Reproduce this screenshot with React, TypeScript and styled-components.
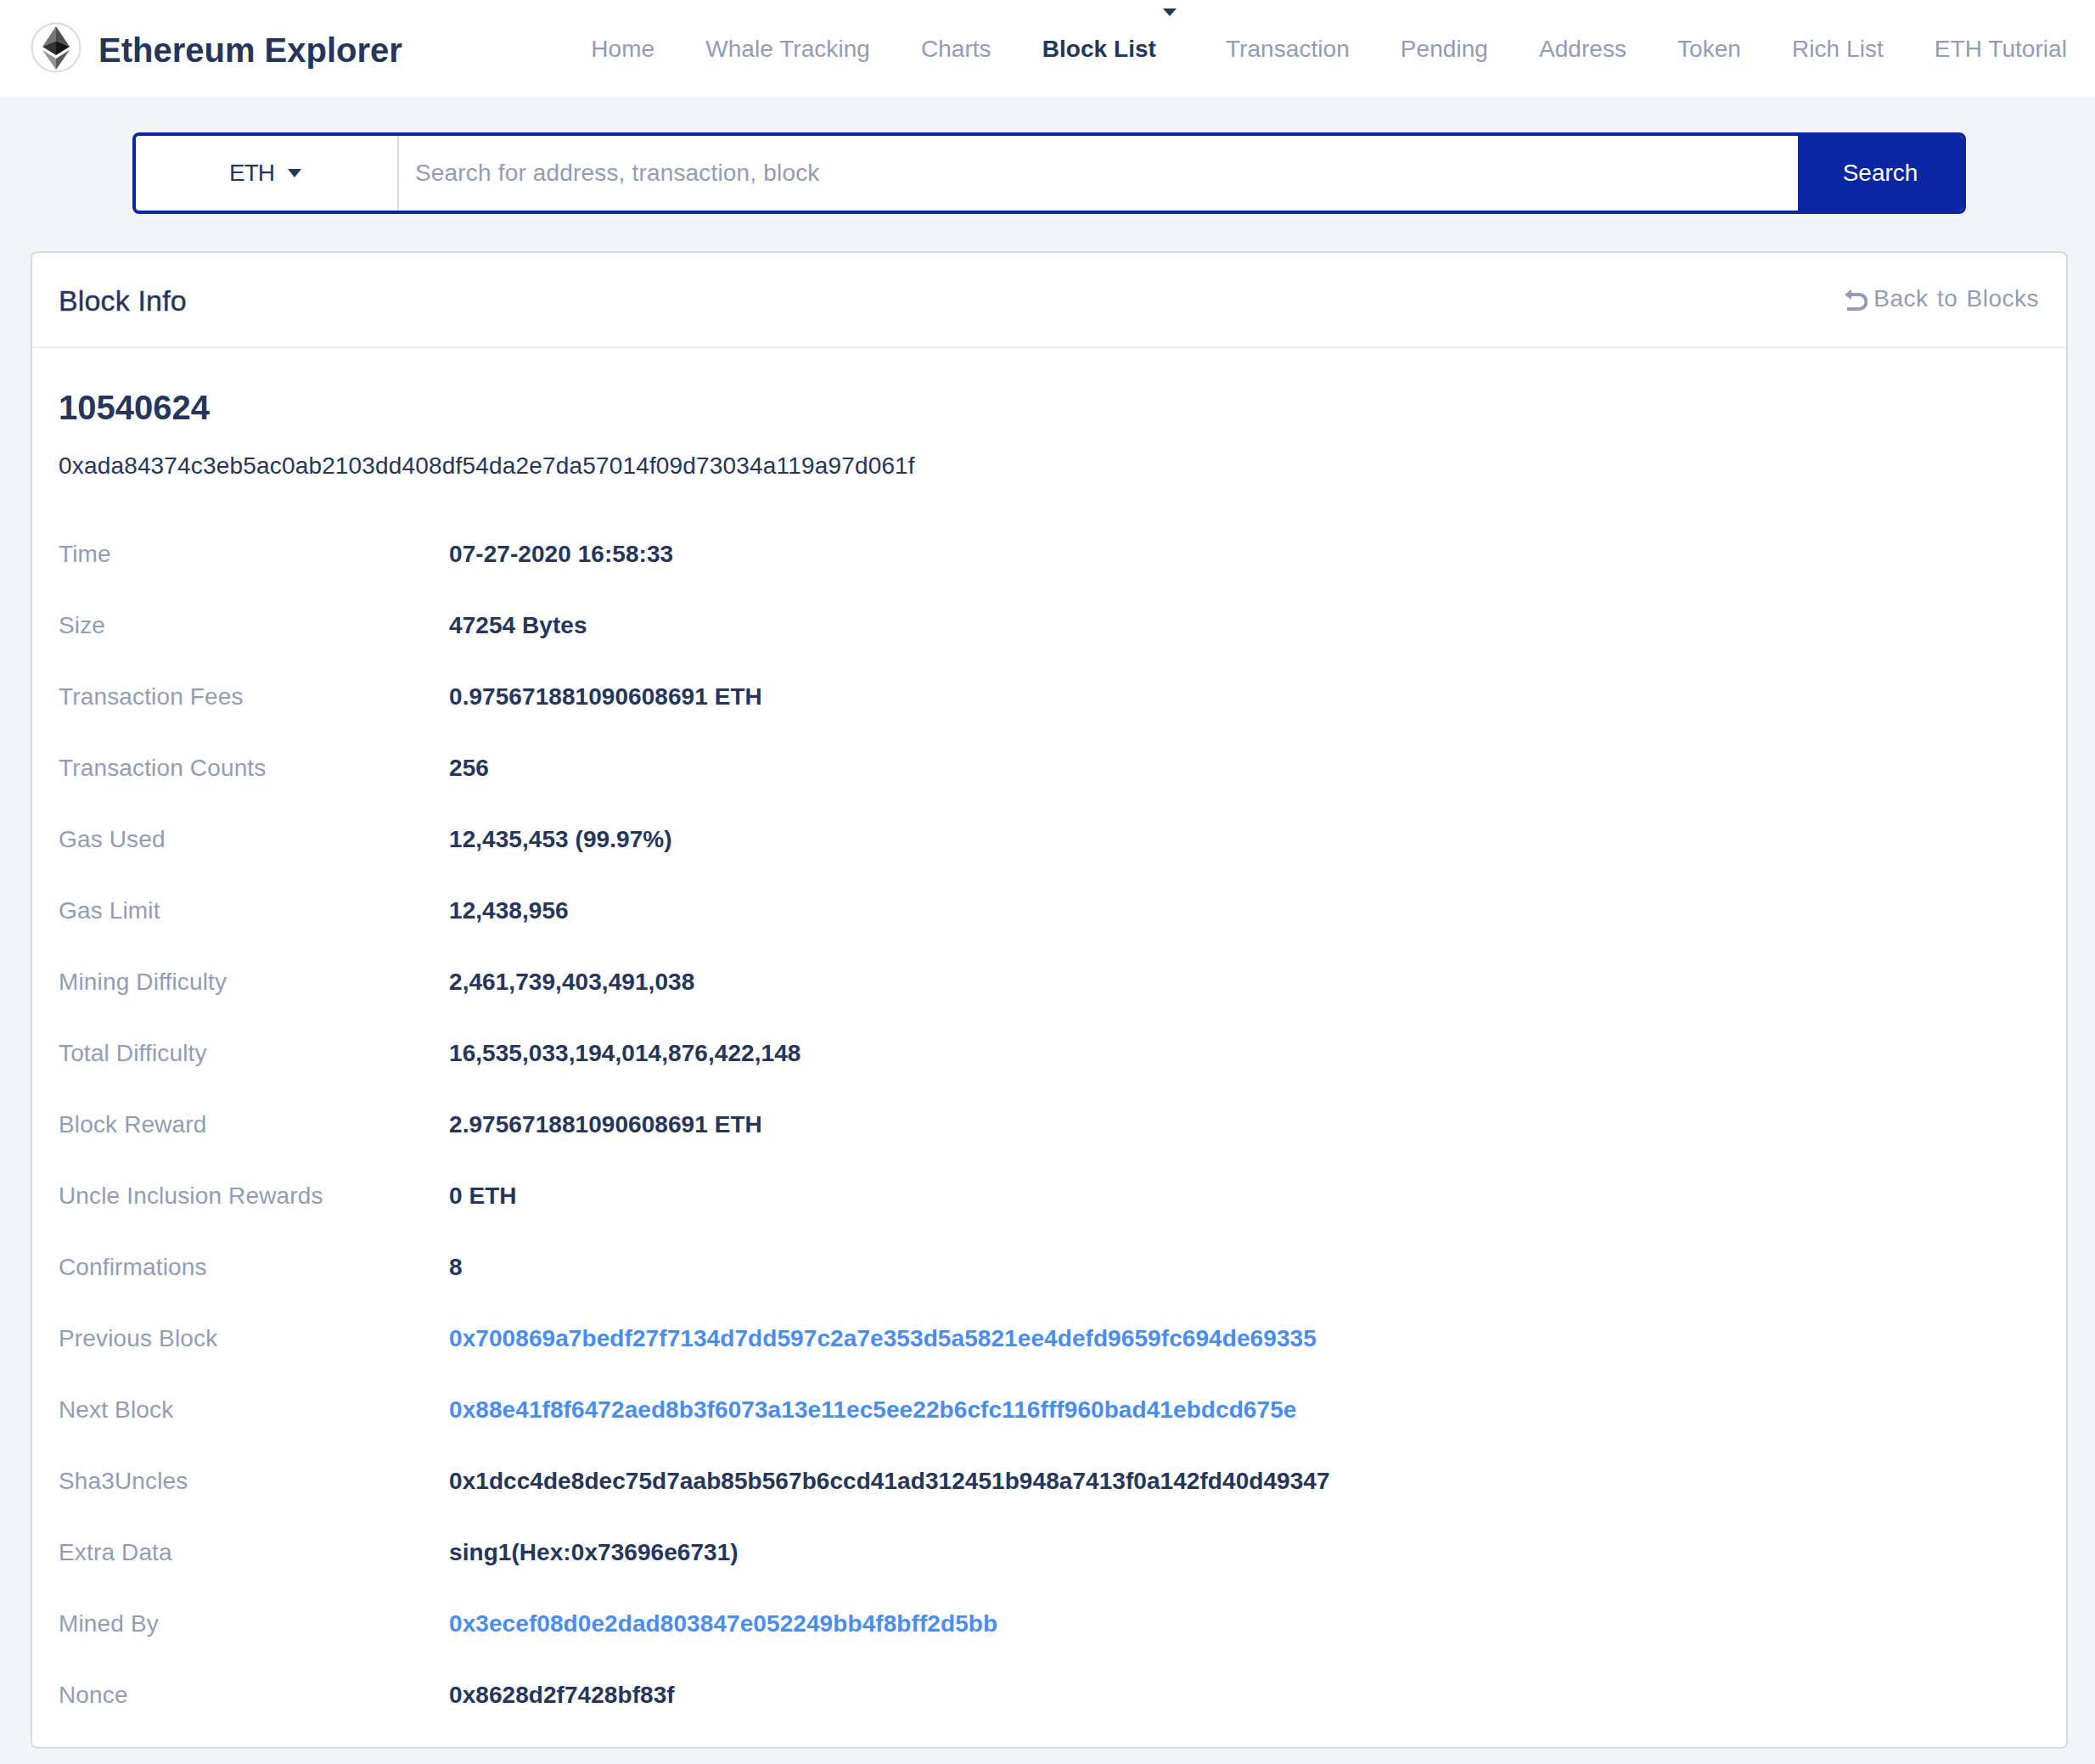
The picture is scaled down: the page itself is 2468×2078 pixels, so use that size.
import styled, { createGlobalStyle } from "styled-components";

const GlobalStyle = createGlobalStyle`
  html, body {
    margin: 0;
    padding: 0;
    background: #f3f4f8;
    font-family: "Liberation Sans", Arial, sans-serif;
    color: #25365a;
  }
  * {
    box-sizing: border-box;
  }
`;

const Page = styled.div`
  width: 2468px;
  min-height: 2078px;
  background: #f3f4f8;
`;

const HeaderBar = styled.header`
  display: flex;
  align-items: center;
  justify-content: space-between;
  height: 114px;
  padding: 0 33px 0 36px;
  background: #fff;
`;

const Brand = styled.div`
  display: flex;
  align-items: center;
  gap: 20px;
`;

const LogoMark = styled.svg`
  display: block;
  width: 60px;
  height: 60px;
  margin-top: -2px;
`;

const BrandName = styled.span`
  font-size: 40px;
  line-height: 48px;
  margin-top: 3px;
  font-weight: 700;
  color: #25365a;
`;

const Nav = styled.nav`
  display: flex;
  align-items: center;
  gap: 60px;
  margin-top: 2px;
`;

const NavItem = styled.a<{ $active?: boolean }>`
  position: relative;
  font-size: 28px;
  line-height: 36px;
  letter-spacing: 0.05px;
  font-weight: ${({ $active }) => ($active ? 700 : 400)};
  color: ${({ $active }) => ($active ? "#25365a" : "#939cb5")};
  margin-right: ${({ $active }) => ($active ? "22px" : "0")};
  cursor: pointer;
`;

const NavCaret = styled.span`
  position: absolute;
  top: -30px;
  right: -24px;
  width: 0;
  height: 0;
  border-left: 8px solid transparent;
  border-right: 8px solid transparent;
  border-top: 9px solid #25365a;
`;

const SearchSection = styled.div`
  padding: 42px 152px 44px 156px;
`;

const SearchBar = styled.form`
  display: flex;
  height: 96px;
  border: 4px solid #0a26a0;
  border-radius: 8px;
  background: #fff;
  overflow: hidden;
`;

const CoinSelect = styled.div`
  display: flex;
  align-items: center;
  justify-content: center;
  gap: 16px;
  width: 310px;
  padding-right: 3px;
  font-size: 28px;
  letter-spacing: -1px;
  color: #25365a;
  border-right: 2px solid #d5d9e3;
`;

const SelectCaret = styled.span`
  width: 0;
  height: 0;
  border-left: 8px solid transparent;
  border-right: 8px solid transparent;
  border-top: 10px solid #25365a;
`;

const SearchInput = styled.input`
  flex: 1;
  min-width: 0;
  padding: 0 0 0 19px;
  border: 0;
  outline: 0;
  font-family: inherit;
  font-size: 28px;
  letter-spacing: 0.17px;
  color: #25365a;
  &::placeholder {
    color: #939cb5;
    opacity: 1;
  }
`;

const SearchButton = styled.button`
  width: 194px;
  border: 0;
  background: #0a26a0;
  color: #fff;
  font-family: inherit;
  font-size: 28px;
`;

const Card = styled.section`
  margin: 0 32px 0 36px;
  background: #fff;
  border: 2px solid #d5d9e3;
  border-radius: 8px;
`;

const CardHeader = styled.div`
  display: flex;
  align-items: center;
  justify-content: space-between;
  height: 112px;
  padding: 0 32px 0 31px;
  border-bottom: 2px solid #eceef3;
`;

const CardTitle = styled.h2`
  margin: 2px 0 0;
  font-size: 34px;
  letter-spacing: 0.15px;
  font-weight: 400;
  -webkit-text-stroke: 0.4px #25365a;
  color: #25365a;
`;

const BackLink = styled.a`
  display: flex;
  align-items: center;
  gap: 7px;
  font-size: 28px;
  letter-spacing: 0.5px;
  word-spacing: 2px;
  color: #939cb5;
  margin-top: -2px;
`;

const BackIcon = styled.svg`
  display: block;
  width: 28px;
  height: 28px;
  margin-top: 4px;
`;

const CardBody = styled.div`
  padding: 46px 31px 19px;
`;

const BlockNumber = styled.h1`
  margin: 0;
  font-size: 40px;
  line-height: 48px;
  font-weight: 700;
  color: #25365a;
`;

const BlockHash = styled.div`
  margin: 25px 0 42px;
  font-size: 28px;
  line-height: 40px;
  letter-spacing: 0.17px;
  color: #25365a;
`;

const InfoRow = styled.div`
  display: grid;
  grid-template-columns: 460px 1fr;
  align-items: center;
  height: 84px;
  font-size: 28px;
`;

const InfoLabel = styled.span`
  letter-spacing: 0.15px;
  color: #939cb5;
`;

const InfoValue = styled.span`
  font-weight: 700;
  letter-spacing: 0.06px;
  color: #25365a;
`;

const InfoLink = styled.a`
  font-weight: 700;
  letter-spacing: 0.08px;
  color: #4a8cf0;
  cursor: pointer;
`;

type Row = { label: string; value: string; link?: boolean };

const navItems = ["Home", "Whale Tracking", "Charts", "Block List", "Transaction", "Pending", "Address", "Token", "Rich List", "ETH Tutorial"];

const rows: Row[] = [
  { label: "Time", value: "07-27-2020 16:58:33" },
  { label: "Size", value: "47254 Bytes" },
  { label: "Transaction Fees", value: "0.975671881090608691 ETH" },
  { label: "Transaction Counts", value: "256" },
  { label: "Gas Used", value: "12,435,453 (99.97%)" },
  { label: "Gas Limit", value: "12,438,956" },
  { label: "Mining Difficulty", value: "2,461,739,403,491,038" },
  { label: "Total Difficulty", value: "16,535,033,194,014,876,422,148" },
  { label: "Block Reward", value: "2.975671881090608691 ETH" },
  { label: "Uncle Inclusion Rewards", value: "0 ETH" },
  { label: "Confirmations", value: "8" },
  { label: "Previous Block", value: "0x700869a7bedf27f7134d7dd597c2a7e353d5a5821ee4defd9659fc694de69335", link: true },
  { label: "Next Block", value: "0x88e41f8f6472aed8b3f6073a13e11ec5ee22b6cfc116fff960bad41ebdcd675e", link: true },
  { label: "Sha3Uncles", value: "0x1dcc4de8dec75d7aab85b567b6ccd41ad312451b948a7413f0a142fd40d49347" },
  { label: "Extra Data", value: "sing1(Hex:0x73696e6731)" },
  { label: "Mined By", value: "0x3ecef08d0e2dad803847e052249bb4f8bff2d5bb", link: true },
  { label: "Nonce", value: "0x8628d2f7428bf83f" },
];

function EthLogo() {
  return (
    <LogoMark viewBox="0 0 60 60">
      <circle cx="30" cy="30" r="28.5" fill="#fff" stroke="#d5d9e3" strokeWidth="2" />
      <polygon points="30,5 14,29 30,22" fill="#767676" />
      <polygon points="30,5 46,29 30,22" fill="#505050" />
      <polygon points="14,29 30,22 30,39" fill="#343434" />
      <polygon points="46,29 30,22 30,39" fill="#161616" />
      <polygon points="14,33 30,43 30,56" fill="#929292" />
      <polygon points="46,33 30,43 30,56" fill="#5c5c5c" />
    </LogoMark>
  );
}

function BackArrow() {
  return (
    <BackIcon viewBox="0 0 28 28">
      <path d="M1 7l8-6v4h9a9 9 0 0 1 0 21H4v-4h14a5 5 0 0 0 0-13H9v4z" fill="#939cb5" />
    </BackIcon>
  );
}

export default function App() {
  return (
    <Page>
      <GlobalStyle />
      <HeaderBar>
        <Brand>
          <EthLogo />
          <BrandName>Ethereum Explorer</BrandName>
        </Brand>
        <Nav>
          {navItems.map((item) => (
            <NavItem key={item} $active={item === "Block List"}>
              {item}
              {item === "Block List" && <NavCaret />}
            </NavItem>
          ))}
        </Nav>
      </HeaderBar>
      <SearchSection>
        <SearchBar>
          <CoinSelect>
            ETH
            <SelectCaret />
          </CoinSelect>
          <SearchInput placeholder="Search for address, transaction, block" />
          <SearchButton type="button">Search</SearchButton>
        </SearchBar>
      </SearchSection>
      <Card>
        <CardHeader>
          <CardTitle>Block Info</CardTitle>
          <BackLink>
            <BackArrow />
            Back to Blocks
          </BackLink>
        </CardHeader>
        <CardBody>
          <BlockNumber>10540624</BlockNumber>
          <BlockHash>0xada84374c3eb5ac0ab2103dd408df54da2e7da57014f09d73034a119a97d061f</BlockHash>
          {rows.map((row) => (
            <InfoRow key={row.label}>
              <InfoLabel>{row.label}</InfoLabel>
              {row.link ? <InfoLink>{row.value}</InfoLink> : <InfoValue>{row.value}</InfoValue>}
            </InfoRow>
          ))}
        </CardBody>
      </Card>
    </Page>
  );
}
